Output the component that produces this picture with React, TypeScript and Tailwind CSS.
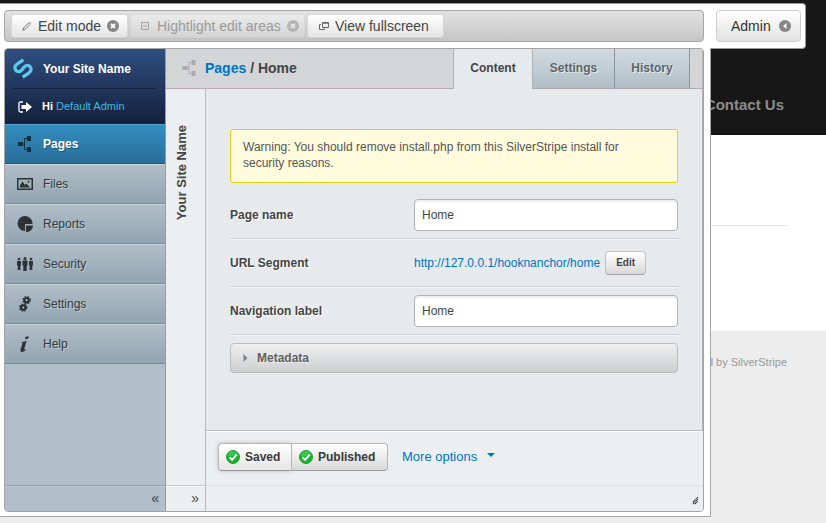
import type { ReactNode } from "react";

type NavItem = { label: string; icon: ReactNode; active?: boolean };

function SiteTreeIcon({ className }: { className?: string }) {
  return (
    <svg viewBox="0 0 14 16" className={className} fill="currentColor" aria-hidden="true">
      <path d="M0 6h5v4H0zM9 0h4v5H9zM9 11h4v5H9z" />
      <path d="M5 7.5h2v1H5zM6 2h1v12H6zM6 2h3v1H6zM6 13h3v1H6z" />
    </svg>
  );
}

function ImageIcon() {
  return (
    <svg viewBox="0 0 16 12" className="h-3 w-4" aria-hidden="true">
      <path d="M.75.75h14.5v10.5H.75z" fill="none" stroke="currentColor" strokeWidth="1.500" />
      <path d="M3 9.500V7l2.500-3.500L8 7l1.500-1.500 3.500 4z" fill="currentColor" />
      <circle cx="11.500" cy="3.800" r="1" fill="currentColor" />
    </svg>
  );
}

function PieIcon() {
  return (
    <svg viewBox="0 0 16 16" className="size-4" fill="currentColor" aria-hidden="true">
      <path d="M8 8V15A7.500 7.500 0 1 1 15.500 8z" />
      <path d="M9 9.500h7A6.500 6.500 0 0 1 9 16z" />
    </svg>
  );
}

function PeopleIcon() {
  return (
    <svg viewBox="0 0 16 14" className="h-3.5 w-4" fill="currentColor" aria-hidden="true">
      <circle cx="2" cy="2" r="1.300" />
      <circle cx="8" cy="1.500" r="1.500" />
      <circle cx="14" cy="2" r="1.300" />
      <path d="M0 4h4v4.500H3.400V13H.7V8.500H0zM12 4h4v4.500h-.7V13h-2.700V8.500H12zM5.500 3.500h5v5h-.8V14H6.300V8.500h-.8z" />
    </svg>
  );
}

function Gear({ cx, cy, r }: { cx: number; cy: number; r: number }) {
  return (
    <g fill="none" stroke="currentColor">
      <circle cx={cx} cy={cy} r={r} strokeWidth="2.200" />
      <circle cx={cx} cy={cy} r={r + 1.4} strokeWidth="1.300" strokeDasharray="1.500 1.400" />
    </g>
  );
}

function GearsIcon() {
  return (
    <svg viewBox="0 0 16 16" className="size-4" aria-hidden="true">
      <Gear cx={9.6} cy={4.2} r={2.2} />
      <Gear cx={6.2} cy={11.6} r={2.2} />
    </svg>
  );
}

function InfoIcon() {
  return (
    <svg viewBox="0 0 16 16" className="size-4" fill="currentColor" aria-hidden="true">
      <path d="M8.600.8 11.800.200 11 2.800 8 3.200zM5.500 6 9.700 5 7.300 12.500c-.3 1 .3 1.200 1.900.4C7.500 15.300 6.200 16 5 15.900c-1.700-.1-1.800-1.500-1.300-3L5.600 7.300 4.300 7z" />
    </svg>
  );
}

function Logo() {
  return (
    <svg viewBox="0 0 60 62" className="h-[21px] w-5 shrink-0" fill="none" stroke="#5bc8ee" strokeWidth="10" aria-hidden="true">
      <path d="M31 5 13 17C4 23 4 33 10 38C16 42 23 40 28 34L32 28C37 22 44 20 50 24C56 29 56 39 47 45L29 57" />
    </svg>
  );
}

function LogoutIcon() {
  return (
    <svg viewBox="0 0 14 12" className="h-3 w-3.5 shrink-0" aria-hidden="true">
      <path d="M5 1H2.500Q1 1 1 2.500v7Q1 11 2.500 11H5" fill="none" stroke="#fff" strokeWidth="1.300" />
      <path d="M3.500 4H8V1l6 5-6 5V8H3.500z" fill="#fff" />
    </svg>
  );
}

function CloseBadge() {
  return (
    <svg viewBox="0 0 12 12" className="size-3 shrink-0" aria-hidden="true">
      <circle cx="6" cy="6" r="6" fill="#868686" />
      <path d="m4 4 4 4M8 4 4 8" stroke="#fff" strokeWidth="1.800" />
    </svg>
  );
}

function CheckBadge() {
  return (
    <svg viewBox="0 0 14 14" className="size-3.5 shrink-0" aria-hidden="true">
      <circle cx="7" cy="7" r="6.500" fill="#14b428" stroke="#2a9a38" />
      <path d="M1.500 6a5.500 5 0 0 1 11 0z" fill="#4fd062" opacity=".6" />
      <path d="m3.600 7.300 2.500 2.500 4.600-5.200" fill="none" stroke="#fff" strokeWidth="2" />
    </svg>
  );
}

const navItems: NavItem[] = [
  { label: "Pages", icon: <SiteTreeIcon className="h-4 w-3.5" />, active: true },
  { label: "Files", icon: <ImageIcon /> },
  { label: "Reports", icon: <PieIcon /> },
  { label: "Security", icon: <PeopleIcon /> },
  { label: "Settings", icon: <GearsIcon /> },
  { label: "Help", icon: <InfoIcon /> },
];

const toolButton =
  "flex h-6 items-center rounded-[3px] border border-[#d8d8d8] bg-linear-to-b from-white to-[#e4e4e4] text-sm text-[#444] shadow-[0_1px_1px_#bbb]";

function SitePage() {
  return (
    <div className="flex min-h-screen flex-col bg-[#ededed]">
      <header className="flex h-[135px] justify-end bg-[#171717] pt-24 pr-[42px]">
        <a href="#contact" className="text-[15px] leading-[18px] font-bold text-[#8c8c8c]">
          Contact Us
        </a>
      </header>
      <main className="h-[196px] bg-white pt-[90px] pr-[39px]">
        <hr className="border-[#e5e5e5]" />
      </main>
      <footer className="pt-6 pr-[39px] text-right text-[11px] leading-[14px] text-[#999]">
        Powered by SilverStripe
      </footer>
    </div>
  );
}

function Toolbar() {
  return (
    <div className="mr-5 flex h-[46px] items-center gap-3 rounded-r border border-l-0 border-[#999] bg-white pr-1 pl-1">
      <div className="flex h-8 flex-1 items-center gap-0.5 rounded border border-[#a6a6a6] bg-linear-to-b from-[#e2e2e2] to-[#c6c6c6] pl-1.5">
        <button className={toolButton + " w-[117px] pl-2.5"}>
          <svg viewBox="0 0 10 10" className="mr-1.5 size-2.5" fill="none" stroke="#777" aria-hidden="true">
            <path d="m.8 9.200.7-2.200 5-5 1.500 1.500-5 5zM7.500 1l1.500 1.500" />
          </svg>
          Edit mode
          <span className="ml-1.5">
            <CloseBadge />
          </span>
        </button>
        <button disabled className={toolButton + " w-[175px] pl-2.5 opacity-40"}>
          <svg viewBox="0 0 8 8" className="mr-2 size-2" fill="none" stroke="#555" aria-hidden="true">
            <path d="M.5.5h7v7h-7zM2 4h4" />
          </svg>
          Hightlight edit areas
          <span className="ml-1.5">
            <CloseBadge />
          </span>
        </button>
        <button className={toolButton + " w-[137px] pl-[11px]"}>
          <svg viewBox="0 0 10 8" className="mr-1.5 h-2 w-2.5" fill="none" stroke="#666" aria-hidden="true">
            <path d="M3.500.5h6v5h-6zM3.500 1.200h6M2 2.500H.5v5h5V6.500" />
          </svg>
          View fullscreen
        </button>
      </div>
      <button className="flex h-8 w-[85px] items-center justify-between rounded border border-[#ccc] bg-linear-to-b from-white to-[#e2e2e2] pr-[9px] pl-3.5 text-sm text-[#333]">
        Admin
        <svg viewBox="0 0 12 12" className="size-3" aria-hidden="true">
          <circle cx="6" cy="6" r="6" fill="#868686" />
          <path d="M7.500 3v6L4 6z" fill="#fff" />
        </svg>
      </button>
    </div>
  );
}

function Sidebar() {
  return (
    <aside className="flex w-[161px] shrink-0 flex-col border-r border-[#999] bg-[#b0bec7] text-[#2f3a40]">
      <div className="flex h-[75px] flex-col bg-linear-to-b from-[#304f82] to-[#14213b] text-white">
        <div className="mx-2 flex h-10 items-center gap-2.5 border-b border-[#14233f] font-bold">
          <Logo />
          Your Site Name
        </div>
        <div className="flex h-[35px] items-center gap-2.5 pl-[13px] text-[11px]">
          <LogoutIcon />
          <span>
            <b>Hi</b>{" "}
            <a href="#profile" className="text-[#3ebae0]">
              Default Admin
            </a>
          </span>
        </div>
      </div>
      <nav className="flex flex-1 flex-col">
        {navItems.map((item) => (
          <a
            key={item.label}
            href={"#" + item.label.toLowerCase()}
            className={
              item.active
                ? "flex h-10 items-center border-t border-b border-t-[#55a4d2] border-b-[#1f5d7e] bg-linear-to-b from-[#338dc1] to-[#296e98] font-bold text-white [text-shadow:1px_1px_0_#1e5270]"
                : "flex h-10 items-center border-t border-b border-t-[#c8d3d9] border-b-[#748d9d] bg-linear-to-b from-[#b0bec7] to-[#92a5b2] [text-shadow:1px_1px_0_#bfcad1]"
            }
          >
            <span className={item.active ? "ml-[13px] w-[25px] text-[#12303f]" : "ml-3 w-[26px] text-[#2c3236]"}>
              {item.icon}
            </span>
            {item.label}
          </a>
        ))}
      </nav>
      <button aria-label="Collapse menu" className="h-[26px] border-t border-[#96a5af] pr-1.5 pb-0.5 text-right text-sm shadow-[inset_0_1px_0_#bdc9d0]">
        «
      </button>
    </aside>
  );
}

const row = "flex h-12 items-center border-b border-[#ced2d6] shadow-[0_1px_0_#f5f7f8]";
const label = "w-[184px] shrink-0 font-bold [text-shadow:1px_1px_0_#fff]";
const field =
  "h-8 min-w-0 flex-1 rounded border border-[#b3b3b3] bg-white px-[7px] text-[#444] shadow-[inset_0_2px_2px_#eee]";
const tab =
  "border-r border-b border-[#b0a9b3] border-r-[#84969f] bg-linear-to-b from-[#d4dbe1] to-[#b0bec7] pb-0.5 font-bold text-[#5f6568] [text-shadow:1px_1px_0_#e4e9ec]";

function EditForm() {
  return (
    <form className="flex-1 border-r border-[#b3b3b3] pt-10 pr-6 pl-6">
      <p className="mb-2 rounded-[3px] border border-[#e8d30b] bg-[#fffbdc] pt-[9px] pr-8 pb-[11px] pl-3 leading-4 text-[#555]">
        Warning: You should remove install.php from this SilverStripe install for security reasons.
      </p>
      <div className={row}>
        <label htmlFor="title" className={label}>
          Page name
        </label>
        <input id="title" defaultValue="Home" className={field} />
      </div>
      <div className={row}>
        <span className={label}>URL Segment</span>
        <a href="#preview" className="text-[#0073c1]">
          http://127.0.0.1/hooknanchor/home
        </a>
        <button
          type="button"
          className="ml-[5px] h-6 w-[41px] rounded border border-[#c0c0c2] border-b-[#a6a6a9] bg-linear-to-b from-white to-[#d9d9d9] text-[10px] font-bold"
        >
          Edit
        </button>
      </div>
      <div className={row}>
        <label htmlFor="menu-title" className={label}>
          Navigation label
        </label>
        <input id="menu-title" defaultValue="Home" className={field} />
      </div>
      <button
        type="button"
        className="mt-2 flex h-[30px] w-full items-center gap-[9px] rounded border border-[#bbbcbe] bg-linear-to-b from-[#efefef] to-[#cdcfd0] pl-3 font-bold text-[#606060] [text-shadow:1px_1px_0_#eee]"
      >
        <svg viewBox="0 0 5 8" className="h-2 w-[5px]" fill="#808080" aria-hidden="true">
          <path d="M.5 0l4 4-4 4z" />
        </svg>
        Metadata
      </button>
    </form>
  );
}

function Actions() {
  return (
    <div className="flex h-[81px] flex-col border-t border-[#b9bbbe] bg-[#eceff1] shadow-[inset_0_1px_0_#fff]">
      <div className="flex h-[54px] items-center pb-0.5 pl-3">
        <button className="flex h-7 w-[73px] items-center gap-[5px] rounded-l border border-r-0 border-[#b6b6b8] border-b-[#9b9b9d] bg-linear-to-b from-white to-[#e6e6e6] pl-[7px] font-bold text-[#393939] shadow-[0_0_4px_#bbb]">
          <CheckBadge />
          Saved
        </button>
        <button className="flex h-7 w-[97px] items-center gap-[5px] rounded-r border border-[#b6b6b8] border-b-[#9b9b9d] bg-linear-to-b from-white to-[#d9d9d9] pl-[7px] font-bold text-[#393939]">
          <CheckBadge />
          Published
        </button>
        <button className="ml-3.5 flex items-center gap-2.5 text-[13px] text-[#0073c1]">
          More options
          <svg viewBox="0 0 8 4" className="mb-1 h-1 w-2" fill="currentColor" aria-hidden="true">
            <path d="M0 0h8L4 4z" />
          </svg>
        </button>
      </div>
      <div className="flex h-[26px] items-end justify-end border-t border-[#e0e3e6] pr-1 pb-1.5">
        <svg viewBox="0 0 7 8" className="h-2 w-[7px]" stroke="#333" strokeWidth="1.100" strokeDasharray="1.400 .5" aria-hidden="true">
          <path d="M1 5 6 0M1 7 6 2M3 7l3-3" />
        </svg>
      </div>
    </div>
  );
}

function AdminPanel() {
  return (
    <div className="relative -mt-px mr-[115px] flex flex-1 border-r border-b border-[#a3a3a3] bg-white pr-1.5 pb-1 pl-1">
      <div className="flex flex-1 overflow-hidden rounded border border-[#a3a3a3] bg-[#e6eaed]">
        <Sidebar />
        <div className="flex min-w-0 flex-1 flex-col">
          <div className="flex h-10 bg-[#d4d5d7]">
            <div className="flex flex-1 items-center border-b border-[#b3abb5] pb-0.5 pl-4 text-sm font-bold text-[#444]">
              <SiteTreeIcon className="mr-2 h-4 w-[15px] text-[#a9abae]" />
              <span>
                <a href="#pages" className="text-[#0073c1]">
                  Pages
                </a>{" "}
                / Home
              </span>
            </div>
            <button className="w-20 border-r border-l border-[#b0b3b6] bg-[#e6eaed] pb-0.5 font-bold">Content</button>
            <button className={tab + " w-[82px]"}>Settings</button>
            <button className={tab + " w-[75px]"}>History</button>
            <div className="w-[13px] border-r border-b border-r-[#b3b3b3] border-b-[#b3abb5]" />
          </div>
          <div className="flex min-h-0 flex-1">
            <div className="flex w-10 shrink-0 flex-col justify-between border-r border-[#b9b9be] bg-[#eceff1]">
              <h3 className="mt-9 ml-1.5 rotate-180 self-start text-[13px] leading-5 font-bold [writing-mode:vertical-rl]">
                Your Site Name
              </h3>
              <button aria-label="Expand panel" className="h-[26px] border-t border-[#c9ccd0] pr-1.5 pb-0.5 text-right text-sm shadow-[inset_0_1px_0_#fff]">
                »
              </button>
            </div>
            <div className="flex min-w-0 flex-1 flex-col">
              <EditForm />
              <Actions />
            </div>
          </div>
        </div>
      </div>
    </div>
  );
}

export default function App() {
  return (
    <div className="relative min-h-screen overflow-hidden font-['Liberation_Sans',Arial,sans-serif] text-xs text-[#444]">
      <SitePage />
      <div className="absolute inset-x-0 top-[3px] bottom-1.5 flex flex-col">
        <Toolbar />
        <AdminPanel />
      </div>
    </div>
  );
}
